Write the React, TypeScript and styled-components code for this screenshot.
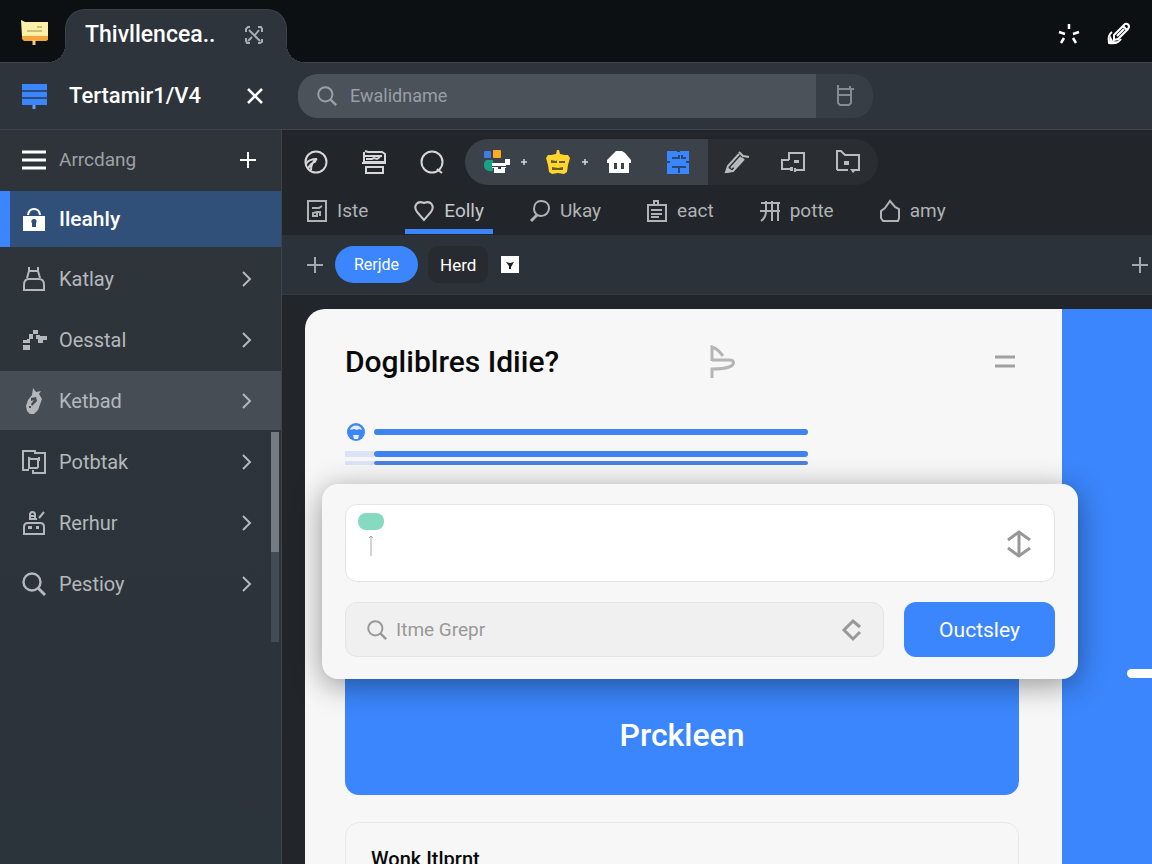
import React from "react";
import styled, { createGlobalStyle, css } from "styled-components";

const color = {
  black: "#0d1013",
  bar: "#2d343b",
  line: "#3c434a",
  dark: "#222529",
  accent: "#3b86fc",
  active: "#30507a",
  hover: "#464d55",
  muted: "#b4b8bc",
  panel: "#f7f7f7",
};

const GlobalStyle = createGlobalStyle`
  *, *::before, *::after { box-sizing: border-box; }
  body {
    margin: 0;
    background: ${color.dark};
    color: #fff;
    font-family: Roboto, "Liberation Sans", sans-serif;
    font-size: 20px;
    line-height: 24px;
  }
  button, input, textarea { font: inherit; color: inherit; }
`;

const Shell = styled.div`
  display: flex;
  flex-direction: column;
  height: 100vh;
  overflow: hidden;
`;

const Drawing = styled.svg<{ $stroke?: number }>`
  display: block;
  flex: none;
  fill: none;
  stroke: currentColor;
  stroke-width: ${(p) => p.$stroke ?? 2};
  overflow: visible;
`;

const PlainButton = styled.button`
  display: flex;
  align-items: center;
  justify-content: center;
  padding: 0;
  border: 0;
  background: none;
  cursor: pointer;
`;

/* Title bar */

const TitleBar = styled.header`
  display: flex;
  align-items: flex-end;
  flex: none;
  height: 63px;
  padding: 0 21px;
  background: ${color.black};
  box-shadow: inset 0 -1px ${color.line};
`;

const TitleLogo = styled.div`
  align-self: center;
  width: 44px;
  padding-top: 3px;
`;

const WindowTab = styled.div`
  position: relative;
  display: flex;
  align-items: center;
  justify-content: space-between;
  width: 222px;
  height: 54px;
  padding: 0 23px 4px 19px;
  border: 1px solid ${color.line};
  border-bottom: 0;
  border-radius: 20px 20px 0 0;
  background: ${color.bar};
  font-size: 23px;
  font-weight: 500;

  &::before,
  &::after {
    content: "";
    position: absolute;
    bottom: 0;
    width: 18px;
    height: 18px;
  }
  &::before {
    right: 100%;
    background: radial-gradient(circle at 0 0, transparent 17px, ${color.line} 17px, ${color.bar} 18px);
  }
  &::after {
    left: 100%;
    background: radial-gradient(circle at 100% 0, transparent 17px, ${color.line} 17px, ${color.bar} 18px);
  }
`;

const TitleActions = styled.div`
  display: flex;
  align-self: center;
  gap: 26px;
  margin-left: auto;
  padding-top: 5px;
`;

/* App bar */

const AppBar = styled.div`
  display: flex;
  align-items: center;
  flex: none;
  height: 67px;
  border-bottom: 1px solid ${color.line};
  background: ${color.bar};
`;

const Brand = styled.div`
  display: flex;
  align-items: center;
  flex: none;
  width: 298px;
  padding: 0 34px 0 21px;
  gap: 21px;
`;

const BrandName = styled.h1`
  flex: 1;
  margin: 0;
  font-size: 22px;
  line-height: 28px;
  font-weight: 500;
  white-space: nowrap;
`;

const SearchBar = styled.form`
  display: flex;
  flex: 0 1 575px;
  height: 44px;
  border-radius: 20px;
  overflow: hidden;
  background: #373e46;
`;

const SearchField = styled.label`
  display: flex;
  align-items: center;
  flex: 1;
  gap: 13px;
  min-width: 0;
  padding-left: 19px;
  background: #4b525a;
  color: #9a9fa5;
  font-size: 18px;
`;

const BareInput = styled.input`
  flex: 1;
  min-width: 0;
  padding: 0;
  border: 0;
  outline: 0;
  background: none;
  &::placeholder { color: inherit; opacity: 1; }
`;

const SearchAction = styled(PlainButton)`
  width: 57px;
  color: #838b94;
`;

/* Body */

const Body = styled.div`
  display: flex;
  flex: 1;
  min-height: 0;
`;

const Sidebar = styled.nav`
  position: relative;
  display: flex;
  flex-direction: column;
  flex: none;
  gap: 2px;
  width: 282px;
  border-right: 1px solid ${color.line};
  background: linear-gradient(#2e3439, #2b333b);
`;

const SidebarHeader = styled.div`
  display: flex;
  align-items: center;
  height: 59px;
  padding: 0 25px 0 22px;
  gap: 13px;
`;

const SidebarTitle = styled.span`
  flex: 1;
  color: #9da1a5;
  font-size: 19px;
`;

const NavItem = styled.a<{ $state?: "active" | "hover" }>`
  display: flex;
  align-items: center;
  height: 59px;
  padding: 0 29px 0 22px;
  gap: 13px;
  color: ${color.muted};
  text-decoration: none;
  ${(p) =>
    p.$state === "hover" &&
    css`
      background: ${color.hover};
    `}
  ${(p) =>
    p.$state === "active" &&
    css`
      height: 56px;
      padding-left: 12px;
      border-left: 10px solid ${color.accent};
      background: ${color.active};
      color: #fff;
      font-size: 21px;
      font-weight: 500;
    `}
`;

const NavLabel = styled.span`
  flex: 1;
`;

const ScrollTrack = styled.div`
  position: absolute;
  top: 302px;
  right: 2px;
  width: 8px;
  height: 210px;
  background: #434b54;
`;

const ScrollThumb = styled.div`
  height: 120px;
  background: #747b81;
`;

const Main = styled.main`
  display: flex;
  flex-direction: column;
  flex: 1;
  min-width: 0;
  background: ${color.dark};
`;

/* Toolbar */

const Toolbar = styled.div`
  display: flex;
  align-items: center;
  flex: none;
  height: 63px;
  padding-left: 22px;
  color: #d5d7d9;
`;

const ToolGroup = styled.div`
  display: flex;
  align-items: center;
  gap: 34px;
  margin-right: 21px;
`;

const PinnedTools = styled.div`
  display: flex;
  align-items: center;
  gap: 19px;
  height: 46px;
  padding: 0 18px;
  border-radius: 23px 0 0 23px;
  background: #3b424a;
`;

const PinnedGroup = styled.div<{ $gap: number }>`
  display: flex;
  align-items: center;
  gap: ${(p) => p.$gap}px;
`;

const ExtraTools = styled.div`
  display: flex;
  align-items: center;
  justify-content: space-between;
  width: 170px;
  height: 46px;
  padding: 0 18px 0 17px;
  border-radius: 0 23px 23px 0;
  background: #2a2d31;
  color: #b9bcbf;
`;

const Tabs = styled.div`
  display: flex;
  flex: none;
  gap: 28px;
  height: 42px;
  padding-left: 16px;
`;

const Tab = styled.button<{ $selected?: boolean }>`
  display: flex;
  align-items: center;
  gap: 10px;
  height: 41px;
  padding: 0 9px;
  border: 0;
  border-bottom: 5px solid ${(p) => (p.$selected ? color.accent : "transparent")};
  background: none;
  color: ${(p) => (p.$selected ? "#c6c8cb" : "#b0b3b6")};
  font-size: 19px;
  cursor: pointer;
`;

const FilterBar = styled.div`
  display: flex;
  align-items: center;
  flex: none;
  height: 60px;
  padding: 0 4px 0 25px;
  border-bottom: 1px solid #343b42;
  background: #2b323a;
  color: #a4a8ad;
`;

const Chip = styled.button<{ $primary?: boolean }>`
  height: 37px;
  margin-left: ${(p) => (p.$primary ? 12 : 10)}px;
  padding: 0 ${(p) => (p.$primary ? 19 : 12)}px;
  border: 0;
  border-radius: ${(p) => (p.$primary ? 19 : 10)}px;
  background: ${(p) => (p.$primary ? color.accent : "#272b2f")};
  color: #fff;
  font-size: ${(p) => (p.$primary ? 16 : 17)}px;
  cursor: pointer;
`;

const ChipMenu = styled(PlainButton)`
  margin-left: 13px;
`;

const AddRight = styled(PlainButton)`
  margin-left: auto;
`;

/* Content */

const Content = styled.div`
  display: flex;
  flex: 1;
  min-height: 0;
  padding: 14px 0 0 23px;
`;

const Panel = styled.section`
  flex: 1;
  min-width: 0;
  padding: 0 43px 0 40px;
  border-radius: 20px 0 0 0;
  background: ${color.panel};
  color: #0a0a0a;
`;

const PanelHeader = styled.div`
  display: flex;
  align-items: center;
  height: 106px;
  padding-right: 4px;
`;

const PanelTitle = styled.h2`
  flex: 0 0 365px;
  margin: 0;
  font-size: 30px;
  line-height: 36px;
  font-weight: 500;
`;

const PanelMenu = styled(PlainButton)`
  margin-left: auto;
`;

const Meters = styled.div`
  display: flex;
  flex-direction: column;
  width: 463px;
  padding-top: 7px;
`;

const MeterRow = styled.div<{ $gap?: number }>`
  display: flex;
  align-items: center;
  margin-top: ${(p) => p.$gap ?? 0}px;
`;

const MeterLead = styled.div<{ $fill?: boolean }>`
  flex: none;
  align-self: stretch;
  width: 29px;
  background: ${(p) => (p.$fill ? "#dbe3f5" : "none")};
`;

const MeterBar = styled.div<{ $thin?: boolean }>`
  flex: 1;
  height: ${(p) => (p.$thin ? 4 : 6)}px;
  border-radius: 3px;
  background: ${(p) => (p.$thin ? "#4a82e0" : "#3f83f0")};
`;

const Composer = styled.form`
  position: relative;
  display: flex;
  flex-direction: column;
  gap: 20px;
  margin: 19px -59px 0 -23px;
  padding: 20px 23px 22px;
  border-radius: 16px;
  background: ${color.panel};
  box-shadow: 0 6px 30px rgba(0, 0, 0, 0.4);
`;

const MessageBox = styled.div`
  display: flex;
  align-items: flex-start;
  height: 78px;
  padding: 8px 23px 0 12px;
  border: 1px solid #e6e6e6;
  border-radius: 12px;
  background: #fff;
  color: #989898;
`;

const MessageInput = styled.textarea`
  flex: 1;
  height: 60px;
  padding: 0 12px;
  border: 0;
  outline: 0;
  resize: none;
  background: none;
`;

const ResizeButton = styled(PlainButton)`
  height: 62px;
`;

const ComposerRow = styled.div`
  display: flex;
  gap: 20px;
`;

const GroupField = styled.label`
  display: flex;
  align-items: center;
  flex: 1;
  min-width: 0;
  height: 55px;
  gap: 9px;
  padding: 0 21px;
  border: 1px solid #e4e4e4;
  border-radius: 12px;
  background: #f0f0f0;
  color: #999;
  font-size: 19px;
`;

const SubmitButton = styled.button`
  width: 151px;
  height: 55px;
  border: 0;
  border-radius: 12px;
  background: ${color.accent};
  color: #fff;
  font-size: 21px;
  cursor: pointer;
`;

const Banner = styled.button`
  display: block;
  width: 100%;
  height: 120px;
  margin-top: -4px;
  border: 0;
  border-radius: 0 0 14px 14px;
  background: ${color.accent};
  color: #fff;
  font-size: 32px;
  font-weight: 500;
  cursor: pointer;
`;

const Card = styled.article`
  margin-top: 27px;
  padding: 24px 25px;
  border: 1px solid #e8e8e8;
  border-radius: 14px;
`;

const CardTitle = styled.h3`
  margin: 0;
  font-size: 20px;
  font-weight: 500;
`;

const SidePanel = styled.aside`
  display: flex;
  flex-direction: column;
  align-items: flex-end;
  flex: none;
  width: 90px;
  padding-top: 360px;
  background: ${color.accent};
`;

const SideHandle = styled.div`
  width: 25px;
  height: 9px;
  border-radius: 5px 0 0 5px;
  background: #fff;
`;

/* Drawings */

type IconProps = { w?: number; h?: number; sw?: number; children: React.ReactNode };

const Icon = ({ w = 24, h = 24, sw = 2, children }: IconProps) => (
  <Drawing width={w} height={h} viewBox={`0 0 ${w} ${h}`} $stroke={sw} aria-hidden="true">
    {children}
  </Drawing>
);

const SearchGlyph = ({ size = 24 }: { size?: number }) => (
  <Drawing width={size} height={size} viewBox="0 0 24 24" $stroke={2.4} aria-hidden="true">
    <circle cx="10" cy="10" r="8.5" />
    <path d="M16 16l7 7" strokeWidth="3" />
  </Drawing>
);

const Chevron = () => (
  <Icon w={10} h={16}>
    <path d="M1 1l7 7-7 7" />
  </Icon>
);

const Plus = () => (
  <Icon w={16} h={16}>
    <path d="M8 0v16M0 8h16" />
  </Icon>
);

const SparkPlus = () => (
  <Icon w={6} h={6} sw={1.5}>
    <path d="M3 0v6M0 3h6" />
  </Icon>
);

const navItems: { label: string; state?: "active" | "hover"; icon: React.ReactNode }[] = [
  {
    label: "Ileahly",
    state: "active",
    icon: (
      <Icon>
        <path d="M6 8c1-8 11-8 12 0" />
        <path
          fill="currentColor"
          stroke="none"
          fillRule="evenodd"
          d="M1 9h22v15H1zM12 12c-3 0-3 3-2 4v4h4v-4c1-1 1-4-2-4z"
        />
      </Icon>
    ),
  },
  {
    label: "Katlay",
    icon: (
      <Icon>
        <path d="M7 0v4h9V0M7 4l-2 7M16 4l2 7M2 23v-5c0-4 2-6 5-6h10c3 0 5 2 5 6v5z" />
      </Icon>
    ),
  },
  {
    label: "Oesstal",
    icon: (
      <Icon>
        <path
          fill="currentColor"
          stroke="none"
          d="M11 2h5v4h-5zM7 6h4v5H7zM14 7h4v4h-4zM18 8h7v4h-4v3h-5v-4h2zM1 12h4v3H1zM5 11h3v4H5zM1 17h7v5H1z"
        />
      </Icon>
    ),
  },
  {
    label: "Ketbad",
    state: "hover",
    icon: (
      <Icon>
        <path
          fill="currentColor"
          stroke="none"
          fillRule="evenodd"
          d="M11 -1l3 4 5-1-2 3 3 5-4 11-4 4h-4l-3-3-1-5 2-6 4-5zM9 9l5-1 1 4-5 5-1-2 3-4-3 1zM7 17h2v2H7z"
        />
      </Icon>
    ),
  },
  {
    label: "Potbtak",
    icon: (
      <Icon>
        <path d="M7 20H1V1h12v3M14 3h9v20H11v-3M7 8l2 1h7v8l-1 1H7zM17 7v4" />
      </Icon>
    ),
  },
  {
    label: "Rerhur",
    icon: (
      <Icon>
        <path d="M2 23v-7c0-3 1-4 4-4h12c3 0 4 1 4 4v7zM7 8h8M8 8V4c0-4 5-4 5 0v4M7 5h6M17 7l5-6" />
        <path fill="currentColor" stroke="none" d="M6 15h4v3H6zM14 15h3v3h-3z" />
      </Icon>
    ),
  },
  { label: "Pestioy", icon: <SearchGlyph /> },
];

const tabs: { label: string; icon: React.ReactNode }[] = [
  {
    label: "Iste",
    icon: (
      <Icon w={20} h={22}>
        <path d="M1 1h18v20H1zM5 8h7l3-2M6 17v-4l4-1h3v4M6 16h4v-3" />
      </Icon>
    ),
  },
  {
    label: "Eolly",
    icon: (
      <Icon w={20} h={22}>
        <path d="M10 20L3 12C-1 6 3 0 10 3c7-3 11 3 7 9z" />
      </Icon>
    ),
  },
  {
    label: "Ukay",
    icon: (
      <Icon w={20} h={22}>
        <path d="M11 1c5 0 8 3 8 7s-3 8-8 8c-4 0-7-3-7-7 0-5 3-8 7-8z" />
        <path d="M7 15l-6 6" strokeWidth="3" />
      </Icon>
    ),
  },
  {
    label: "eact",
    icon: (
      <Icon w={20} h={22}>
        <path d="M1 5h18v16H1zM7 5V1h4v4M4 10h11M4 14h11M4 17h8" />
      </Icon>
    ),
  },
  {
    label: "potte",
    icon: (
      <Icon w={20} h={22}>
        <path d="M1 3h19M0 11h20M6 1v10c0 5-2 8-5 10M12 1v12M18 3v18M12 21V11" />
      </Icon>
    ),
  },
  {
    label: "amy",
    icon: (
      <Icon w={20} h={22}>
        <path d="M10 1l5 6 4 2v9l-1 3H3l-2-3v-7l4-3z" />
      </Icon>
    ),
  },
];

export default function App() {
  return (
    <Shell>
      <GlobalStyle />
      <TitleBar>
        <TitleLogo>
          <Icon w={27} h={26}>
            <path fill="#f3a73a" stroke="none" d="M1 14h26v6l-2 1H3l-2-2z" />
            <path fill="#fff0a8" stroke="none" d="M0 0l4 2h23v14H1z" />
            <path d="M6 11h15M16 7h5" stroke="#a08a4a" strokeWidth="1" />
            <path d="M13 20v5" stroke="#f5c982" strokeWidth="3" />
          </Icon>
        </TitleLogo>
        <WindowTab>
          <span>Thivllencea..</span>
          <PlainButton aria-label="Close tab">
            <Icon w={18} h={18}>
              <path
                d="M1 6V3l2-2h2M13 1h3l1 2v3M17 13v3l-2 1h-2M5 17H2l-1-2v-3M4 4l11 11M14 4l-4 5M7 11l-4 4"
                stroke="#a9adb1"
              />
            </Icon>
          </PlainButton>
        </WindowTab>
        <TitleActions>
          <PlainButton aria-label="Effects">
            <Icon sw={2.5}>
              <path d="M12 2v5M2 10l6 2M22 10l-6 2M7 16l-3 5M16 16l3 5" />
            </Icon>
          </PlainButton>
          <PlainButton aria-label="Edit">
            <Icon>
              <path d="M7 13L17 3c2-3 7 0 4 4L11 17l-4 1zM10 14l7-7M16 4l4 4" />
              <path d="M5 10c-3 2-4 6-3 11 5 1 9 0 12-4" />
              <path fill="currentColor" stroke="none" d="M3 13l3 6 6 1-3 2H2z" />
            </Icon>
          </PlainButton>
        </TitleActions>
      </TitleBar>

      <AppBar>
        <Brand>
          <Icon w={27} h={25}>
            <path fill={color.accent} stroke="none" d="M1 0h25v6H1zM1 8h25v5H1zM1 15h25v6H1z" />
            <path d="M1 7h25M1 14h25" stroke="#2866c6" strokeWidth="1" />
            <path d="M13 21v4" stroke="#6aa0e8" strokeWidth="3" />
          </Icon>
          <BrandName>Tertamir1/V4</BrandName>
          <PlainButton aria-label="Close">
            <Icon w={18} h={18} sw={2.5}>
              <path d="M2 2l14 14M16 2L2 16" />
            </Icon>
          </PlainButton>
        </Brand>
        <SearchBar>
          <SearchField>
            <SearchGlyph size={20} />
            <BareInput type="text" placeholder="Ewalidname" aria-label="Search" />
          </SearchField>
          <SearchAction type="button" aria-label="Clipboard">
            <Icon w={18} h={22}>
              <path d="M2 4h13v14l-2 2H4l-2-2zM2 10h13M2 0v4M13 4h5M14 1v4" />
            </Icon>
          </SearchAction>
        </SearchBar>
      </AppBar>

      <Body>
        <Sidebar>
          <SidebarHeader>
            <Icon w={24} h={20} sw={3}>
              <path d="M0 2h24M0 10h24M0 18h24" />
            </Icon>
            <SidebarTitle>Arrcdang</SidebarTitle>
            <PlainButton aria-label="Add">
              <Plus />
            </PlainButton>
          </SidebarHeader>
          {navItems.map((item) => (
            <NavItem key={item.label} href="#" $state={item.state}>
              {item.icon}
              <NavLabel>{item.label}</NavLabel>
              {item.state !== "active" && <Chevron />}
            </NavItem>
          ))}
          <ScrollTrack>
            <ScrollThumb />
          </ScrollTrack>
        </Sidebar>

        <Main>
          <Toolbar>
            <ToolGroup>
              <PlainButton aria-label="History">
                <Icon>
                  <circle cx="12" cy="12" r="10.5" />
                  <path d="M2 14c2-4 6-5 11-5-4 2-6 6-6 11M4 19c1-3 4-6 8-8" />
                </Icon>
              </PlainButton>
              <PlainButton aria-label="Print">
                <Icon>
                  <path d="M3 1l3 1h14l3 2v8H2V2M0 13h24M4 17h17v6H4zM2 6h18M4 9h6l2-1 3 1 3-2" />
                </Icon>
              </PlainButton>
              <PlainButton aria-label="Find">
                <Icon>
                  <circle cx="12" cy="12" r="10.5" />
                  <path d="M17 19l5 4" />
                </Icon>
              </PlainButton>
            </ToolGroup>
            <PinnedTools>
              <PinnedGroup $gap={11}>
                <PlainButton aria-label="Shapes">
                  <Icon w={27} h={24}>
                    <g stroke="none">
                      <rect x="1" y="1" width="7" height="7" rx="1" fill="#3c7de8" />
                      <rect x="10" y="0" width="8" height="8" rx="1" fill="#ffab1e" />
                      <path fill="#19a184" d="M5 10h5v11c-5 1-9-1-9-6 0-3 1-5 4-5z" />
                      <path fill="#fff" d="M9 13h13v-4h5v6h-4v3h-1v5H11v-5H9z" />
                      <path fill="#3b424a" d="M9 16h14v1h-5v2h-3v-2H9z" />
                    </g>
                  </Icon>
                </PlainButton>
                <SparkPlus />
              </PinnedGroup>
              <PinnedGroup $gap={12}>
                <PlainButton aria-label="Assistant">
                  <Icon>
                    <g stroke="none">
                      <path
                        fill="#ffd52e"
                        d="M10 4l1-4h2l1 4 5 1h3l2 3-2 7-1 7-3 2-6-1-6 1-3-2-1-7-2-7 2-3h3z"
                      />
                      <path fill="#6b5b20" d="M5 10l5 1 1-1v3H5zM13 11h6v2h-6zM6 17l6 1 5-1v3H6z" />
                    </g>
                  </Icon>
                </PlainButton>
                <SparkPlus />
              </PinnedGroup>
              <PinnedGroup $gap={35}>
                <PlainButton aria-label="Home">
                  <Icon>
                    <path
                      fill="#fff"
                      stroke="none"
                      fillRule="evenodd"
                      d="M7 3l2-2h6l3 2 6 7v3h-2v10H2V13H0v-3zM7 13v6h3v-6zM14 13v6h3v-6z"
                    />
                  </Icon>
                </PlainButton>
                <PlainButton aria-label="Board">
                  <Icon>
                    <path fill={color.accent} stroke="none" d="M1 1h10v1h3V1h9v23H1z" />
                    <path d="M6 8h7V5M16 5v3h4M1 12h3M20 12h3M6 17h7v6M13 17h7" stroke="#28477a" />
                  </Icon>
                </PlainButton>
              </PinnedGroup>
            </PinnedTools>
            <ExtraTools>
              <PlainButton aria-label="Pen">
                <Icon>
                  <path d="M14 4L3 16l-2 6 7-1 11-12M6 18L16 7M14 2l4 4 6 1M9 18l9-10" />
                  <path fill="currentColor" stroke="none" d="M2 17l6 4-6 2z" />
                </Icon>
              </PlainButton>
              <PlainButton aria-label="Windows">
                <Icon>
                  <path d="M8 10V3h15v17h-8M8 10H1v9h10M14 18v4" />
                  <path fill="currentColor" stroke="none" d="M13 10h5v3h-5zM9 17h3v4H9z" />
                </Icon>
              </PlainButton>
              <PlainButton aria-label="Folder">
                <Icon>
                  <path d="M1 20V1h4l4 4h14v15h-4M1 20h11" />
                  <path fill="currentColor" stroke="none" d="M8 11h5v4H8zM14 19h5v2l-2 2z" />
                </Icon>
              </PlainButton>
            </ExtraTools>
          </Toolbar>

          <Tabs role="tablist">
            {tabs.map((tab) => (
              <Tab key={tab.label} role="tab" aria-selected={tab.label === "Eolly"} $selected={tab.label === "Eolly"}>
                {tab.icon}
                {tab.label}
              </Tab>
            ))}
          </Tabs>

          <FilterBar>
            <PlainButton aria-label="Add filter">
              <Plus />
            </PlainButton>
            <Chip $primary>Rerjde</Chip>
            <Chip>Herd</Chip>
            <ChipMenu aria-label="More filters">
              <Icon w={18} h={17}>
                <path fill="#fff" stroke="none" d="M0 0h18v17H0z" />
                <path fill="#1b1e22" stroke="none" d="M5 6l4 1 4-1-3 5v2H8v-3z" />
              </Icon>
            </ChipMenu>
            <AddRight aria-label="Add column">
              <Plus />
            </AddRight>
          </FilterBar>

          <Content>
            <Panel>
              <PanelHeader>
                <PanelTitle>Dogliblres Idiie?</PanelTitle>
                <Icon w={27} h={34} sw={3}>
                  <path d="M2 16V2c4 1 8 5 11 9M2 15h17c6 0 6 5 0 7-5 2-11 2-17 2v9" stroke="#b5b5b5" />
                </Icon>
                <PanelMenu aria-label="Menu">
                  <Icon w={20} h={14} sw={3}>
                    <path d="M0 2h20M0 11h20" stroke="#a0a0a0" />
                  </Icon>
                </PanelMenu>
              </PanelHeader>

              <Meters>
                <MeterRow>
                  <MeterLead>
                    <Icon w={20} h={20}>
                      <circle cx="11" cy="10" r="9" fill={color.accent} stroke="none" />
                      <path fill="#e6eefc" stroke="none" d="M5 8c1-6 11-6 12 0l-3-1-2 1-3-1zM8 13h6l-1 4H9z" />
                    </Icon>
                  </MeterLead>
                  <MeterBar />
                </MeterRow>
                <MeterRow $gap={9}>
                  <MeterLead $fill />
                  <MeterBar />
                </MeterRow>
                <MeterRow $gap={4}>
                  <MeterLead $fill />
                  <MeterBar $thin />
                </MeterRow>
              </Meters>

              <Composer>
                <MessageBox>
                  <Icon w={26} h={44}>
                    <rect x="0" y="0" width="26" height="17" rx="8" fill="#86dac0" stroke="none" />
                    <path d="M13 23v20M11 25l2-2 2 2" stroke="#a3aaa8" strokeWidth="1" />
                  </Icon>
                  <MessageInput aria-label="Message" />
                  <ResizeButton type="button" aria-label="Resize">
                    <Icon w={24} h={28} sw={3}>
                      <path d="M1 10L12 2l11 8M1 18l11 8 11-8M12 2v24" />
                    </Icon>
                  </ResizeButton>
                </MessageBox>
                <ComposerRow>
                  <GroupField>
                    <SearchGlyph size={20} />
                    <BareInput type="text" placeholder="Itme Grepr" aria-label="Group" />
                    <Icon w={20} h={22} sw={3}>
                      <path d="M18 8l-7-6-9 9 9 9 7-7" />
                    </Icon>
                  </GroupField>
                  <SubmitButton type="button">Ouctsley</SubmitButton>
                </ComposerRow>
              </Composer>

              <Banner>Prckleen</Banner>

              <Card>
                <CardTitle>Wonk Itlprnt</CardTitle>
              </Card>
            </Panel>
            <SidePanel>
              <SideHandle />
            </SidePanel>
          </Content>
        </Main>
      </Body>
    </Shell>
  );
}
